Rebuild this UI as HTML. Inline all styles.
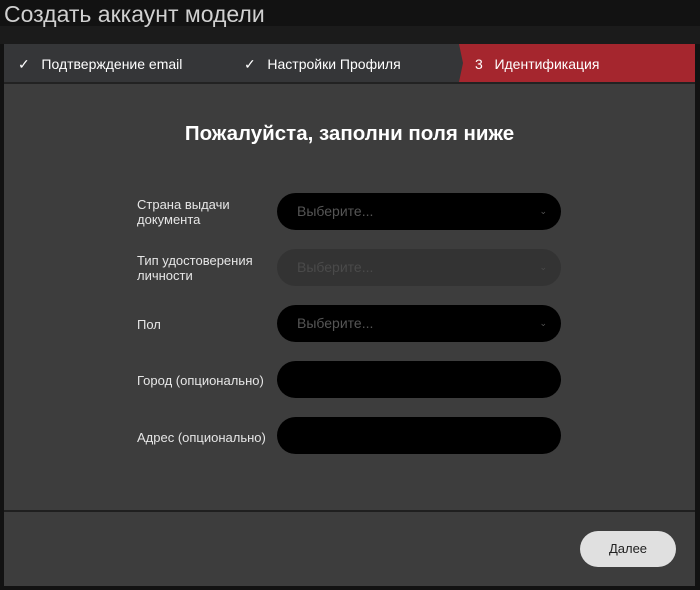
<!DOCTYPE html><html><head><meta charset="utf-8"><style>
body{margin:0;width:700px;height:590px;background:#121212;font-family:"Liberation Sans",sans-serif;position:relative;overflow:hidden}
.t{position:absolute;left:4px;top:1px;font-size:23px;color:#d0d0d0}
.bgline{position:absolute;left:0;top:26px;width:700px;height:18px;background:#1b1b1b}
.m{position:absolute;left:4px;top:44px;width:691px;height:542px;background:#3d3d3d}
.hd{position:absolute;left:0;top:0;width:691px;height:38px;background:#353638;border-bottom:2px solid #222}
.hd span{position:absolute;top:12px;font-size:14px;color:#fff}
.red{position:absolute;left:455px;top:0;width:236px;height:38px;background:#a5262e;clip-path:polygon(0 0,100% 0,100% 100%,0 100%,4px 50%)}
h1{position:absolute;top:78px;left:0;width:691px;text-align:center;font-size:20.5px;color:#fff;margin:0}
.l{position:absolute;left:133px;font-size:13px;color:#e6e6e6;line-height:15px}
.f{position:absolute;left:273px;width:284px;height:37px;border-radius:19px;background:#000;color:#555;font-size:14px;line-height:37px;text-indent:20px}
.f.d{background:#333;color:#4a4a4a}
.f i{position:absolute;right:14px;top:0;font-style:normal;font-size:9px}
.ft{position:absolute;left:0;top:466px;width:691px;height:2px;background:#1f1f1f}
.b{position:absolute;left:576px;top:487px;width:96px;height:36px;border-radius:18px;background:#e0e0e0;color:#222;font-size:13px;text-align:center;line-height:36px}
</style></head><body>
<div class="bgline"></div>
<div class="t">Создать аккаунт модели</div>
<div class="m">
<div class="hd"><div class="red"></div>
<span style="left:14px">✓&nbsp;&nbsp; Подтверждение email</span>
<span style="left:240px">✓&nbsp;&nbsp; Настройки Профиля</span>
<span style="left:471px">3&nbsp;&nbsp; Идентификация</span></div>
<h1>Пожалуйста, заполни поля ниже</h1>
<div class="l" style="top:153px">Страна выдачи<br>документа</div>
<div class="f" style="top:149px">Выберите...<i>⌄</i></div>
<div class="l" style="top:209px">Тип удостоверения<br>личности</div>
<div class="f d" style="top:205px">Выберите...<i>⌄</i></div>
<div class="l" style="top:273px">Пол</div>
<div class="f" style="top:261px">Выберите...<i>⌄</i></div>
<div class="l" style="top:329px">Город (опционально)</div>
<div class="f" style="top:317px"></div>
<div class="l" style="top:386px">Адрес (опционально)</div>
<div class="f" style="top:373px"></div>
<div class="ft"></div>
<div class="b">Далее</div>
</div>
</body></html>
